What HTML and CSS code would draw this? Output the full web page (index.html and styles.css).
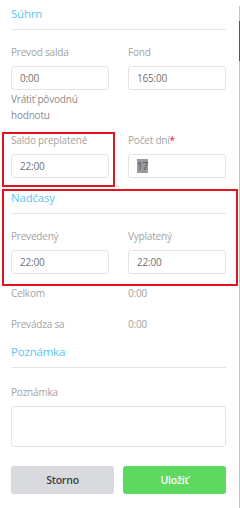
FILE: index.html
```html
<!DOCTYPE html>
<html lang="sk">
<head>
  <meta charset="UTF-8">
  <meta name="viewport" content="width=device-width, initial-scale=1.0">
  <title>Súhrn</title>
  <link rel="stylesheet" href="styles.css">
</head>
<body>

  <div class="page">
    <div class="scroll-thumb"></div>

    <h3 class="section-title first">Súhrn</h3>
    <div class="row">
      <div class="field">
        <label>Prevod salda</label>
        <div class="input">0:00</div>
        <div class="hint">Vrátiť pôvodnú hodnotu</div>
      </div>
      <div class="field">
        <label>Fond</label>
        <div class="input">165:00</div>
      </div>
    </div>
    <div class="row">
      <div class="field">
        <label>Saldo preplatené</label>
        <div class="input">22:00</div>
      </div>
      <div class="field">
        <label>Počet dní<span class="required">*</span></label>
        <div class="input"><span class="selected">17</span></div>
      </div>
    </div>

    <h3 class="section-title">Nadčasy</h3>
    <div class="row">
      <div class="field">
        <label>Prevedený</label>
        <div class="input">22:00</div>
      </div>
      <div class="field">
        <label>Vyplatený</label>
        <div class="input">22:00</div>
      </div>
    </div>

    <div class="info-row">
      <span>Celkom</span>
      <span>0:00</span>
    </div>
    <div class="info-row">
      <span>Prevádza sa</span>
      <span>0:00</span>
    </div>

    <h3 class="section-title">Poznámka</h3>
    <div class="field">
      <label>Poznámka</label>
      <div class="input textarea"></div>
    </div>

    <div class="actions">
      <button class="btn btn-cancel">Storno</button>
      <button class="btn btn-save">Uložiť</button>
    </div>

    <!-- highlight boxes -->
    <div class="mark mark-saldo"></div>
    <div class="mark mark-overtime"></div>
  </div>

</body>
</html>
```

FILE: styles.css
```css
body {
  margin: 0;
  padding: 0;
  background-color: #fff;
  font-family: "Open Sans", Lato, sans-serif;
  font-size: 10px;
  line-height: 16px;
  letter-spacing: -0.2px;
  color: #a3a3a3;
}

.page {
  position: relative;
  width: 215px;
  height: 508px;
  padding: 0 13px 0 11px;
  border-right: 1px solid #c4c4c4;
  box-sizing: content-box;
}

.scroll-thumb {
  position: absolute;
  right: -1px;
  top: 15px;
  width: 1px;
  height: 40px;
  background-color: #555;
}

.section-title {
  margin: 12px 0 0;
  padding-bottom: 7px;
  border-bottom: 1px solid #e6e6e6;
  font-size: 11.5px;
  font-weight: normal;
  line-height: 16px;
  color: #5bc6f5;
}

.section-title.first {
  margin-top: 6px;
}

.row {
  display: grid;
  grid-template-columns: 98px 98px;
  column-gap: 19px;
  margin-top: 14px;
}

.row + .row {
  margin-top: 9px;
}

.field label {
  display: block;
  margin-bottom: 6px;
}

.section-title + .field {
  margin-top: 16px;
}

.required {
  color: #e8101e;
}

.input {
  height: 24px;
  box-sizing: border-box;
  padding: 0 8px;
  border: 1px solid #e4e4e4;
  border-radius: 3px;
  line-height: 22px;
  color: #707070;
}

.input.textarea {
  height: 41px;
}

.selected {
  background-color: #9a9a9a;
  color: #555;
}

.hint {
  margin-top: 1px;
  color: #8a8a8a;
}

.info-row {
  display: grid;
  grid-template-columns: 117px auto;
  margin-top: 11px;
}

.info-row + .info-row {
  margin-top: 15px;
}

.actions {
  display: grid;
  grid-template-columns: 103px 103px;
  column-gap: 9px;
  margin-top: 19px;
}

.btn {
  height: 28px;
  border: none;
  border-radius: 3px;
  font-family: "Open Sans", Lato, sans-serif;
  font-size: 10.5px;
  font-weight: 600;
  letter-spacing: -0.2px;
  cursor: pointer;
}

.btn-cancel {
  background-color: #d9dadd;
  color: #3a3d45;
}

.btn-save {
  background-color: #5dd860;
  color: #fff;
}

.mark {
  position: absolute;
  border: 2px solid #e3131b;
  box-sizing: border-box;
}

.mark-saldo {
  left: 2px;
  top: 126px;
  width: 113px;
  height: 55px;
}

.mark-overtime {
  left: 2px;
  top: 183px;
  width: 236px;
  height: 97px;
}
```
